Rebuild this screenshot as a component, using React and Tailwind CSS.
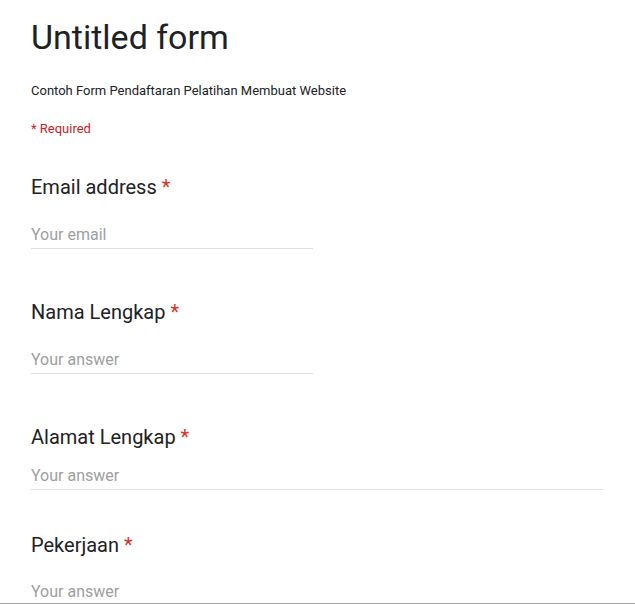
import React from "react";

const fields = [
  { label: "Email address", placeholder: "Your email", wide: false, gap: "mt-[23px]", top: "mt-[38px]" },
  { label: "Nama Lengkap", placeholder: "Your answer", wide: false, gap: "mt-[23px]", top: "mt-[51px]" },
  { label: "Alamat Lengkap", placeholder: "Your answer", wide: true, gap: "mt-[14px]", top: "mt-[51px]" },
  { label: "Pekerjaan", placeholder: "Your answer", wide: true, gap: "mt-[22px]", top: "mt-[43px]" },
];

export default function App() {
  return (
    <div
      className="w-[635px] h-[604px] overflow-hidden bg-white border-b border-[#a8a8a8] text-[#202124]"
      style={{ fontFamily: "Roboto, 'Liberation Sans', sans-serif" }}
    >
      <div className="h-[603px] overflow-hidden pl-[31px]">
        {/* Header */}
        <h1 className="mt-[17px] text-[34px] leading-[40px] font-normal text-[#202124]">
          Untitled form
        </h1>
        <p className="mt-[26px] text-[13px] leading-[16px] text-[#202124]">
          Contoh Form Pendaftaran Pelatihan Membuat Website
        </p>
        <p className="mt-[22px] text-[13px] leading-[16px] text-[#c5221f]">* Required</p>

        {/* Questions */}
        {fields.map((f) => (
          <div key={f.label} className={f.top}>
            <div className="text-[20px] leading-[24px] text-[#202124]">
              {f.label} <span className="text-[#d93025]">*</span>
            </div>
            <div
              className={`${f.gap} ${
                f.wide ? "w-[572px]" : "w-[282px]"
              } border-b border-[#e0e0e0] text-[16px] leading-[24px] pt-[1px] pb-[1px] text-[#9e9e9e]`}
            >
              {f.placeholder}
            </div>
          </div>
        ))}
      </div>
    </div>
  );
}
